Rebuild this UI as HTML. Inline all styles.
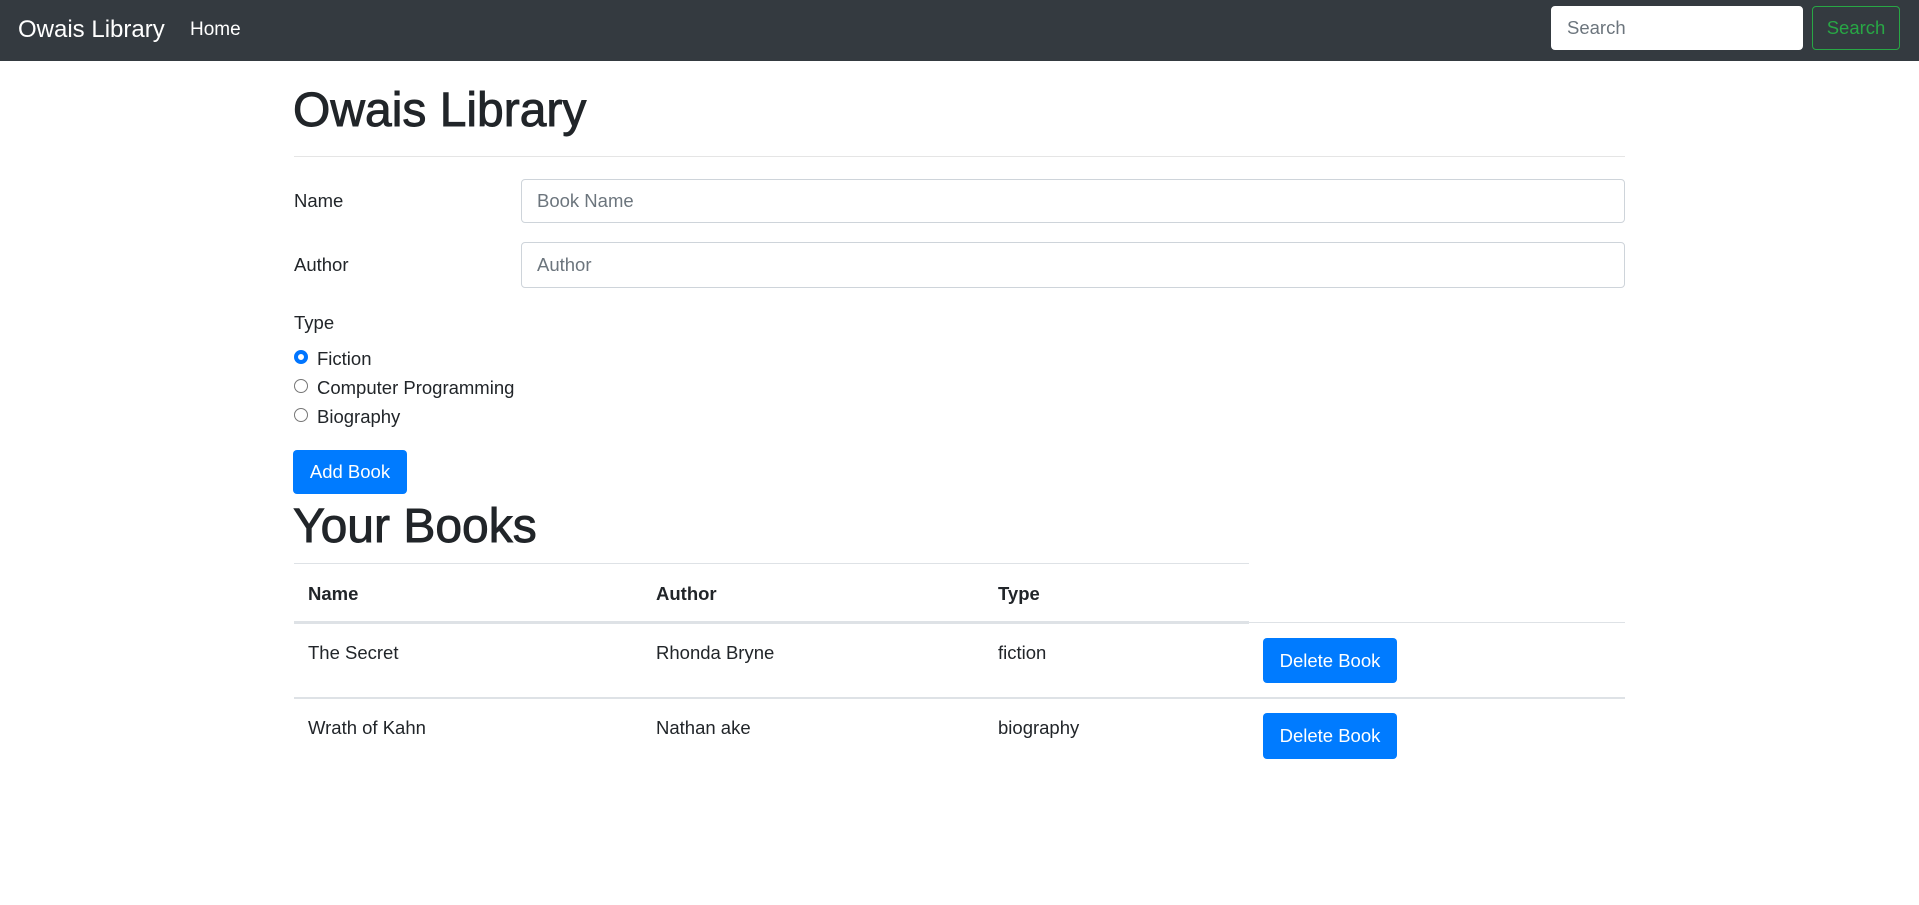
<!DOCTYPE html>
<html><head><meta charset="utf-8"><style>
*{box-sizing:border-box;margin:0;padding:0}
body{width:1919px;height:905px;background:#fff;font-family:"Liberation Sans",sans-serif;color:#212529;position:relative;overflow:hidden}
.a{position:absolute;white-space:nowrap}
.nav{position:absolute;left:0;top:0;width:1919px;height:61px;background:#343a40}
.inp{position:absolute;border:1px solid #ced4da;border-radius:4px;background:#fff;color:#6c757d;font-size:18.5px;padding-left:15px;display:flex;align-items:center}
.btn{position:absolute;background:#007bff;color:#fff;border-radius:4px;font-size:18.5px;display:flex;align-items:center;justify-content:center}
.lbl{font-size:18.5px;transform:translateY(-50%)}
.radio{position:absolute;width:14px;height:14px;border-radius:50%;border:1px solid #767676;background:#fff}
.line{position:absolute;background:#dee2e6}
.h{font-size:48px;line-height:56px;-webkit-text-stroke:0.9px #212529}
</style></head><body>
<div class="nav"></div>
<div class="a" style="left:18px;top:16px;font-size:24px;color:#fff">Owais Library</div>
<div class="a" style="left:190px;top:19px;font-size:19px;color:#fff">Home</div>
<div class="inp" style="left:1551px;top:6px;width:252px;height:44px;border-color:#fff">Search</div>
<div class="a" style="left:1812px;top:6px;width:88px;height:44px;border:1px solid #28a745;border-radius:4px;color:#28a745;font-size:18.5px;display:flex;align-items:center;justify-content:center">Search</div>

<div class="a h" style="left:293px;top:83px">Owais Library</div>
<div class="line" style="left:294px;top:156px;width:1331px;height:1px;background:#e5e5e5"></div>

<div class="a lbl" style="left:294px;top:201px">Name</div>
<div class="inp" style="left:521px;top:179px;width:1104px;height:44px">Book Name</div>
<div class="a lbl" style="left:294px;top:265px">Author</div>
<div class="inp" style="left:521px;top:242px;width:1104px;height:46px">Author</div>
<div class="a lbl" style="left:294px;top:323px">Type</div>

<div class="radio" style="left:294px;top:350px;border:4px solid #0075ff"></div>
<div class="a lbl" style="left:317px;top:359px">Fiction</div>
<div class="radio" style="left:294px;top:379px"></div>
<div class="a lbl" style="left:317px;top:388px">Computer Programming</div>
<div class="radio" style="left:294px;top:408px"></div>
<div class="a lbl" style="left:317px;top:417px">Biography</div>

<div class="btn" style="left:293px;top:450px;width:114px;height:44px">Add Book</div>
<div class="a h" style="left:293px;top:499px">Your Books</div>

<div class="line" style="left:294px;top:563px;width:955px;height:1px"></div>
<div class="a lbl" style="left:308px;top:594px;font-weight:bold">Name</div>
<div class="a lbl" style="left:656px;top:594px;font-weight:bold">Author</div>
<div class="a lbl" style="left:998px;top:594px;font-weight:bold">Type</div>
<div class="line" style="left:294px;top:622px;width:1331px;height:1px"></div>
<div class="line" style="left:294px;top:621px;width:955px;height:3px"></div>

<div class="a lbl" style="left:308px;top:653px">The Secret</div>
<div class="a lbl" style="left:656px;top:653px">Rhonda Bryne</div>
<div class="a lbl" style="left:998px;top:653px">fiction</div>
<div class="btn" style="left:1263px;top:638px;width:134px;height:45px">Delete Book</div>
<div class="line" style="left:294px;top:697px;width:1331px;height:2px"></div>
<div class="a lbl" style="left:308px;top:728px">Wrath of Kahn</div>
<div class="a lbl" style="left:656px;top:728px">Nathan ake</div>
<div class="a lbl" style="left:998px;top:728px">biography</div>
<div class="btn" style="left:1263px;top:713px;width:134px;height:46px">Delete Book</div>
</body></html>
